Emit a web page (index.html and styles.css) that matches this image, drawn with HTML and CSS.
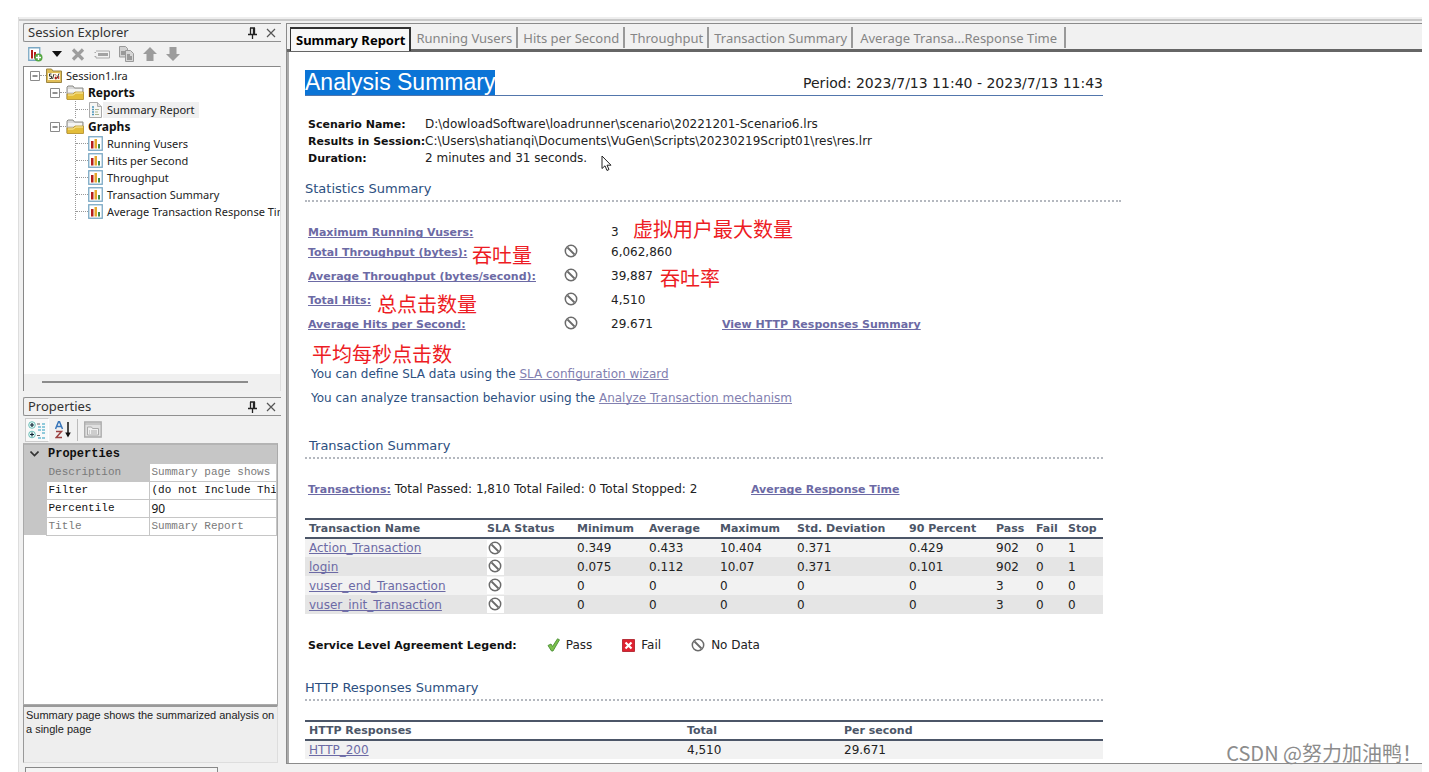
FILE: index.html
```html
<!DOCTYPE html>
<html lang="en">
<head>
<meta charset="utf-8">
<title>Analysis - Session1.lra</title>
<link rel="stylesheet" href="styles.css">
</head>
<body>
<svg class="defs" aria-hidden="true">
  <symbol id="pin" viewBox="0 0 9 12"><path d="M2 1h5M2.500 1v6M6.500 1v6M5.500 1v6M0 7.500h9M4.500 8v4" fill="none" stroke="#222" stroke-width="1.300"/></symbol>
  <symbol id="close" viewBox="0 0 10 10"><path d="M1 1l8 8M9 1l-8 8" fill="none" stroke="#555" stroke-width="1.200"/></symbol>
  <symbol id="nodata" viewBox="0 0 14 14"><circle cx="7" cy="7" r="5.700" fill="#fff" stroke="#6b6b6b" stroke-width="1.500"/><path d="M3.500 3.500l7 7" stroke="#6b6b6b" stroke-width="1.800"/></symbol>
  <symbol id="chart" viewBox="0 0 15 15"><rect x=".75" y=".75" width="13.500" height="13.500" fill="#fff" stroke="#7ba8c4" stroke-width="1.300"/><path d="M3 5h2.500v7.500H3z" fill="#b5201c"/><path d="M6.500 3H9v9.500H6.500z" fill="#e6a82c"/><path d="M10 8h2v4.500h-2z" fill="#3f8b46"/></symbol>
  <symbol id="folder" viewBox="0 0 18 16"><path d="M1 14V2l1-1h5l1.500 2H17v11z" fill="#d8d8d8" stroke="#8b8b86"/><path d="M2 4h14v3H2z" fill="#f4f4f2"/><path d="M1 14.500V9h6l2-2h8.500v7.500z" fill="#e3bd3a" stroke="#b8922a" stroke-width=".8"/><path d="M2 10h5.500l2-2H17" fill="none" stroke="#fbeeb0"/></symbol>
  <symbol id="session" viewBox="0 0 16 15"><path d="M.5 14.500V1h5l1.500 2h8.500v11.500z" fill="#e0bd57" stroke="#9d8642"/><path d="M2 5h12v7H2z" fill="#fffbea"/><path d="M5.500 6h-2v2.200h2v2.300h-2M8 6l-1.500 5" fill="none" stroke="#333"/><path d="M9 6l1.500 2M9 9h1.500v2H9z" fill="#b5201c" stroke="#b5201c" stroke-width=".6"/><path d="M13 5.500l-2 5" stroke="#333"/><path d="M12.200 8h1v3h-1z" fill="#b5201c"/></symbol>
  <symbol id="minus" viewBox="0 0 10 10"><path d="M.5 .5h9v9h-9z" fill="#fff" stroke="#8a8a8a"/><path d="M2.500 5h5" stroke="#222"/></symbol>
</svg>
<div class="app">
  <aside class="side">
    <section class="explorer">
      <header class="pane-title"><h2>Session Explorer</h2>
        <button type="button" aria-label="Pin explorer"><svg width="9" height="12"><use href="#pin"/></svg></button>
        <button type="button" aria-label="Close explorer"><svg width="10" height="10"><use href="#close"/></svg></button>
      </header>
      <div class="tools">
        <button type="button" aria-label="Add"><svg width="15" height="15" viewBox="0 0 15 15"><path d="M.75 .75h11v12.500h-11z" fill="#fff" stroke="#7ba8c4" stroke-width="1.300"/><path d="M3 3h2v8.500H3z" fill="#b5201c"/><path d="M6 5h2v6.500H6z" fill="#b5201c"/><circle cx="10.500" cy="10.500" r="4" fill="#55a743"/><path d="M10.500 8v5M8 10.500h5" stroke="#fff" stroke-width="1.400"/></svg></button>
        <button type="button" aria-label="Add options"><svg width="10" height="6" viewBox="0 0 10 6"><path d="M0 0h10L5 6z" fill="#111"/></svg></button>
        <button type="button" aria-label="Delete"><svg width="14" height="13" viewBox="0 0 14 13"><path d="M2 1.500l10 10M12 1.500l-10 10" stroke="#9d9d9d" stroke-width="3.200"/></svg></button>
        <button type="button" aria-label="Rename"><svg width="16" height="9" viewBox="0 0 16 9"><path d="M2 1h13.500v7H2V6.500H.5M.5 2.500H2" fill="none" stroke="#a9a9a9"/><path d="M4 3h10v3H4z" fill="#a2a2a2"/></svg></button>
        <button type="button" aria-label="Duplicate"><svg width="15" height="16" viewBox="0 0 15 16"><path d="M.5 .5h6l2 2V11h-8z" fill="#d2d2d2" stroke="#999"/><path d="M2 5h4v4H2z" fill="#999"/><path d="M6.500 4.500h5l3 3v8h-8z" fill="#d6d6d6" stroke="#999"/><path d="M8 8h3v2h2v4H8z" fill="#999"/></svg></button>
        <button type="button" aria-label="Move up"><svg width="14" height="14" viewBox="0 0 14 14"><path d="M7 0l7 7h-3.500v7h-7V7H0z" fill="#9c9c9c"/></svg></button>
        <button type="button" aria-label="Move down"><svg width="14" height="14" viewBox="0 0 14 14"><path d="M7 14l7-7h-3.500V0h-7v7H0z" fill="#9c9c9c"/></svg></button>
      </div>
      <div class="tree">
        <ul class="tree-root">
          <li><div class="node"><svg width="10" height="10"><use href="#minus"/></svg><i class="link"></i><svg width="16" height="15"><use href="#session"/></svg><span>Session1.lra</span></div>
            <ul class="groups">
              <li><div class="node"><svg width="10" height="10"><use href="#minus"/></svg><i class="link"></i><svg width="18" height="16"><use href="#folder"/></svg><b>Reports</b></div>
                <ul class="leaves"><li class="node"><i class="link long"></i><svg width="15" height="16" viewBox="0 0 15 16"><path d="M1.500 .5h8l4 4v11h-12z" fill="#f6f6f4" stroke="#aaa"/><path d="M9.500 .5v4h4" fill="#ddd" stroke="#aaa"/><path d="M4 5h2M4 7.500h2M4 10h2M4 12.500h2" stroke="#4c94bb" stroke-width="1.300"/><path d="M7 7.500h4M7 10h3M7 12.500h4" stroke="#a8b48c"/></svg><span class="picked">Summary Report</span></li></ul>
              </li>
              <li><div class="node"><svg width="10" height="10"><use href="#minus"/></svg><i class="link"></i><svg width="18" height="16"><use href="#folder"/></svg><b>Graphs</b></div>
                <ul class="leaves">
                  <li class="node"><i class="link long"></i><svg width="15" height="15"><use href="#chart"/></svg><span>Running Vusers</span></li>
                  <li class="node"><i class="link long"></i><svg width="15" height="15"><use href="#chart"/></svg><span>Hits per Second</span></li>
                  <li class="node"><i class="link long"></i><svg width="15" height="15"><use href="#chart"/></svg><span>Throughput</span></li>
                  <li class="node"><i class="link long"></i><svg width="15" height="15"><use href="#chart"/></svg><span>Transaction Summary</span></li>
                  <li class="node"><i class="link long"></i><svg width="15" height="15"><use href="#chart"/></svg><span>Average Transaction Response Time</span></li>
                </ul>
              </li>
            </ul>
          </li>
        </ul>
        <div class="hscroll"><i></i></div>
      </div>
    </section>
    <section class="props">
      <header class="pane-title"><h2>Properties</h2>
        <button type="button" aria-label="Pin properties"><svg width="9" height="12"><use href="#pin"/></svg></button>
        <button type="button" aria-label="Close properties"><svg width="10" height="10"><use href="#close"/></svg></button>
      </header>
      <div class="tools prop-tools">
        <button type="button" class="on" aria-label="Categorized"><svg width="18" height="18" viewBox="0 0 18 18"><circle cx="4" cy="4" r="3.300" fill="#e2fbf8" stroke="#72beb8"/><circle cx="4" cy="13.500" r="3.300" fill="#e2fbf8" stroke="#72beb8"/><path d="M2 4h4M4 2v4M2 13.500h4M4 11.500v4" stroke="#123" stroke-width="1.200"/><path d="M9 3h3M9 14.500h3" stroke="#666"/><path d="M10 6h3M14 3h3M14 6h3M10 9h3M14 9h3M14 12h3M10 17h3M14 17h3" stroke="#6dbad1" stroke-width="1.300"/></svg></button>
        <button type="button" aria-label="Alphabetical"><svg width="16" height="18" viewBox="0 0 16 18"><path d="M.5 8L3.500 .8h1L7.500 8M1.500 5.500h5" fill="none" stroke="#3976ba" stroke-width="1.500"/><path d="M1 10.500h5.500L1.200 16.500H7" fill="none" stroke="#9b4242" stroke-width="1.500"/><path d="M13 1v14" stroke="#111" stroke-width="1.500"/><path d="M10.200 11.500h5.600L13 16.500z" fill="#111"/></svg></button>
        <i class="sep"></i>
        <button type="button" aria-label="Property pages"><svg width="18" height="17" viewBox="0 0 18 17"><path d="M.7 1h16.500v15H.7z" fill="#e0e0e0" stroke="#aaa" stroke-width="1.300"/><path d="M1 3h16" stroke="#aaa"/><path d="M3.500 6h4l1 1.500h6V14h-11z" fill="#f0f0f0" stroke="#aaa"/><path d="M5 10h1M7 10h6M5 12h1M7 12h6" stroke="#aaa"/></svg></button>
      </div>
      <div class="grid-box">
        <table class="prop-grid">
          <colgroup><col class="c-gut"><col class="c-key"><col></colgroup>
          <tr class="cat"><th><svg width="9" height="6" viewBox="0 0 9 6"><path d="M.5 .5l4 4 4-4" fill="none" stroke="#333" stroke-width="1.600"/></svg></th><th colspan="2">Properties</th></tr>
          <tr class="dim first"><th></th><td>Description</td><td>Summary page shows the summarized analysis on a single page</td></tr>
          <tr><th></th><td>Filter</td><td>(do not Include Think Time)</td></tr>
          <tr><th></th><td>Percentile</td><td class="sans">90</td></tr>
          <tr class="dim"><th></th><td>Title</td><td>Summary Report</td></tr>
        </table>
      </div>
      <p class="hint">Summary page shows the summarized analysis on a single page</p>
    </section>
    <div class="stub"></div>
  </aside>
  <main class="doc">
    <nav class="tabs">
      <button type="button" class="active">Summary Report</button><button type="button">Running Vusers</button><button type="button">Hits per Second</button><button type="button">Throughput</button><button type="button">Transaction Summary</button><button type="button" class="wide">Average Transa...Response Time</button>
    </nav>
    <article class="report">
      <div class="title"><h1>Analysis Summary</h1><span>Period: 2023/7/13 11:40 - 2023/7/13 11:43</span></div>
      <dl class="meta">
        <dt>Scenario Name:</dt><dd>D:\dowloadSoftware\loadrunner\scenario\20221201-Scenario6.lrs</dd>
        <dt>Results in Session:</dt><dd>C:\Users\shatianqi\Documents\VuGen\Scripts\20230219Script01\res\res.lrr</dd>
        <dt>Duration:</dt><dd>2 minutes and 31 seconds.</dd>
      </dl>
      <h2 class="section stats-head">Statistics Summary</h2>
      <div class="stats">
        <div class="stat top"><a href="#">Maximum Running Vusers:</a><i></i><span>3</span></div>
        <div class="stat"><a href="#">Total Throughput (bytes):</a><svg width="14" height="14"><use href="#nodata"/></svg><span>6,062,860</span></div>
        <div class="stat"><a href="#">Average Throughput (bytes/second):</a><svg width="14" height="14"><use href="#nodata"/></svg><span>39,887</span></div>
        <div class="stat"><a href="#">Total Hits:</a><svg width="14" height="14"><use href="#nodata"/></svg><span>4,510</span></div>
        <div class="stat"><a href="#">Average Hits per Second:</a><svg width="14" height="14"><use href="#nodata"/></svg><span>29.671</span><a href="#">View HTTP Responses Summary</a></div>
        <em class="note n1">虚拟用户最大数量</em><em class="note n2">吞吐量</em><em class="note n3">吞吐率</em><em class="note n4">总点击数量</em><em class="note n5">平均每秒点击数</em>
      </div>
      <div class="tips">
        <p>You can define SLA data using the <a href="#">SLA configuration wizard</a></p>
        <p>You can analyze transaction behavior using the <a href="#">Analyze Transaction mechanism</a></p>
      </div>
      <h2 class="section inset">Transaction Summary</h2>
      <div class="totals"><p><a href="#">Transactions:</a> Total Passed: 1,810 Total Failed: 0 Total Stopped: 2</p><p><a href="#">Average Response Time</a></p></div>
      <table class="data">
        <colgroup><col class="w-name"><col class="w-sla"><col class="w-min"><col class="w-avg"><col class="w-max"><col class="w-std"><col class="w-pct"><col class="w-pass"><col class="w-fail"><col></colgroup>
        <thead><tr><th>Transaction Name</th><th>SLA Status</th><th>Minimum</th><th>Average</th><th>Maximum</th><th>Std. Deviation</th><th>90 Percent</th><th>Pass</th><th>Fail</th><th>Stop</th></tr></thead>
        <tbody>
          <tr><td><a href="#">Action_Transaction</a></td><td><svg width="17" height="17" viewBox="-1 -1 17 17"><use href="#nodata" width="14" height="14"/></svg></td><td>0.349</td><td>0.433</td><td>10.404</td><td>0.371</td><td>0.429</td><td>902</td><td>0</td><td>1</td></tr>
          <tr><td><a href="#">login</a></td><td><svg width="17" height="17" viewBox="-1 -1 17 17"><use href="#nodata" width="14" height="14"/></svg></td><td>0.075</td><td>0.112</td><td>10.07</td><td>0.371</td><td>0.101</td><td>902</td><td>0</td><td>1</td></tr>
          <tr><td><a href="#">vuser_end_Transaction</a></td><td><svg width="17" height="17" viewBox="-1 -1 17 17"><use href="#nodata" width="14" height="14"/></svg></td><td>0</td><td>0</td><td>0</td><td>0</td><td>0</td><td>3</td><td>0</td><td>0</td></tr>
          <tr><td><a href="#">vuser_init_Transaction</a></td><td><svg width="17" height="17" viewBox="-1 -1 17 17"><use href="#nodata" width="14" height="14"/></svg></td><td>0</td><td>0</td><td>0</td><td>0</td><td>0</td><td>3</td><td>0</td><td>0</td></tr>
        </tbody>
      </table>
      <div class="legend">
        <b>Service Level Agreement Legend:</b>
        <span><svg width="13" height="14" viewBox="0 0 13 14"><path d="M1 7.500l3-1.500 1.500 2.500L10.500 .8l2 1L6 13H4.500z" fill="#7cc04c" stroke="#4b8e35" stroke-width=".9"/></svg>Pass</span>
        <span><svg width="13" height="13" viewBox="0 0 13 13"><path d="M.5 .5h12v12H.5z" fill="#df2230" stroke="#b8303a"/><path d="M3.500 3.500l6 6M9.500 3.500l-6 6" stroke="#fff" stroke-width="2.200"/></svg>Fail</span>
        <span><svg width="14" height="14"><use href="#nodata"/></svg>No Data</span>
      </div>
      <h2 class="section">HTTP Responses Summary</h2>
      <table class="data http">
        <colgroup><col class="w-code"><col class="w-total"><col></colgroup>
        <thead><tr><th>HTTP Responses</th><th>Total</th><th>Per second</th></tr></thead>
        <tbody><tr><td><a href="#">HTTP_200</a></td><td>4,510</td><td>29.671</td></tr></tbody>
      </table>
      <svg class="cursor" width="11" height="17" viewBox="0 0 11 17" aria-hidden="true"><path d="M1 1v12.500l3-2.700 2 4.700 2-1-2-4.300h4z" fill="#fff" stroke="#222"/></svg>
    </article>
  </main>
  <div class="credit">CSDN @努力加油鸭！</div>
</div>
</body>
</html>
```
FILE: styles.css
```css
* { box-sizing: border-box; }
body { margin: 0; background: #fff; font-family: "DejaVu Sans", "Noto Sans CJK SC", sans-serif; font-size: 12px; color: #222; }
h1, h2, p, ul, dl, dd { margin: 0; padding: 0; font-weight: normal; }
ul { list-style: none; }
svg { display: block; flex: none; }
button { border: 0; padding: 0; background: none; font: inherit; color: inherit; }
a { color: #6c6aa5; text-decoration-skip-ink: none; }
.defs { position: absolute; width: 0; height: 0; }

.app { position: relative; display: flex; min-height: 755px; margin: 17px 7px 0 18px; padding: 6px 0 0 4px; gap: 5px; background: #f1f1f1; border-left: 1px solid #ddd; box-shadow: inset 0 2px #eee, inset 0 4px #c9c9c9; overflow: hidden; }

/* left column */
.side { display: flex; flex-direction: column; flex: none; width: 258px; gap: 6px; font-family: "Noto Sans", sans-serif; font-size: 11px; }
.explorer { display: flex; flex-direction: column; height: 368px; }
.pane-title { display: flex; align-items: center; gap: 9px; height: 19px; padding: 0 5px 0 4px; border: 1px solid #909090; border-right: 0; border-radius: 2px 0 0 2px; }
.pane-title h2 { flex: 1; font-size: 13px; line-height: 17px; color: #333; }
.tools { display: flex; align-items: center; gap: 9px; height: 24px; padding: 0 5px; }
.tree { flex: 1; display: flex; flex-direction: column; border: 1px solid #888; border-right-color: #ddd; border-bottom: 0; background: #fff; min-height: 0; overflow: hidden; }
.tree-root { flex: 1; padding: 0 0 0 6px; }
.node { display: flex; align-items: center; height: 17px; white-space: nowrap; }
.node span, .node b { padding: 0 4px; line-height: 16px; }
.node b { font-size: 12px; color: #111; }
.node .picked { background: #f0f0f0; }
.link { width: 6px; flex: none; border-top: 1px dotted #999; }
.link.long { width: 12px; }
.groups { margin-left: 20px; }
.leaves { margin-left: 25px; border-left: 1px dotted #999; }
.hscroll { height: 17px; padding: 7px 32px 0 18px; background: #f0f0f0; }
.hscroll i { display: block; height: 2px; background: #8c8c8c; }

.props { display: flex; flex-direction: column; height: 366px; }
.prop-tools { height: 27px; padding: 0 2px; gap: 6px; }
.prop-tools .on { padding: 2px; background: #f9f9f9; border: 1px solid #ccc; border-right-color: #fff; }
.sep { height: 22px; border-left: 1px solid #bbb; }
.grid-box { flex: 1; margin-right: 3px; border: 1px solid #aaa; border-top: 2px solid #b4b4b4; background: #fff; overflow: hidden; }
.prop-grid { width: 100%; table-layout: fixed; border-collapse: collapse; font-family: "Liberation Mono", monospace; font-size: 11px; color: #111; }
.prop-grid tr { height: 18px; }
.prop-grid th { background: #c6c6c6; padding: 0 2px; font-size: 12px; text-align: left; }
.prop-grid th svg { margin-left: 4px; }
.prop-grid td { padding: 0 3px 0 2px; border: 1px solid #c6c6c6; white-space: nowrap; overflow: hidden; line-height: 15px; }
.prop-grid .dim td { color: #7a7a7a; }
.prop-grid .first td:nth-child(2) { background: #c6c6c6; }
.prop-grid .sans { font-family: "Noto Sans", sans-serif; font-size: 12px; }
.c-gut { width: 22px; }
.c-key { width: 103px; }
.hint { height: 58px; margin-right: 3px; padding: 1px 0 0 2px; border: 1px solid #999; border-top-width: 2px; border-right-color: #ddd; border-bottom-color: #ddd; background: #eee; font: 11px/14px "Liberation Sans", sans-serif; }
.stub { width: 193px; height: 12px; margin-left: 2px; border: 1px solid #888; background: #f4f4f4; margin-top: -2px; }

/* document */
.doc { flex: 1; min-width: 0; display: flex; flex-direction: column; height: 741px; border: 1px solid #8b8b8b; border-right: 0; }
.tabs { display: flex; height: 28px; padding: 3px 0 0 3px; border-bottom: 3px solid #666; font: 13px/22px "Noto Sans", sans-serif; color: #858585; }
.tabs button { height: 21px; padding: 0 4px 0 5px; border-right: 2px solid #999; line-height: 22px; white-space: nowrap; }
.tabs .wide { padding: 0 7px; }
.tabs .active { height: 24px; border: 1px solid #333; border-width: 2px 2px 0 1px; background: #f8f8f8; color: #000; font-weight: bold; line-height: 20px; }
.report { position: relative; flex: 1; padding: 18px 18px 0 16px; border-left: 2px solid #aaa; background: #fff; overflow: hidden; }
.title { display: flex; align-items: center; justify-content: space-between; max-width: 798px; height: 26px; border-bottom: 1px solid #5276ac; }
.title h1 { font: 23px/25px "Liberation Sans", sans-serif; background: #0b74d6; color: #fff; }
.title span { font-size: 14px; }
.meta { display: grid; grid-template-columns: 117px auto; margin: 20px 0 0 3px; line-height: 17px; }
.meta dt { font-weight: bold; white-space: nowrap; font-size: 11px; color: #111; }
.section { max-width: 798px; height: 22px; border-bottom: 2px dotted #b4b8bf; font-size: 13px; line-height: 18px; color: #2c4f80; }
.stats-head { max-width: 816px; margin-top: 13px; }
.inset { margin-top: 27px; padding-left: 4px; }
.stats { position: relative; padding: 22px 0 0 3px; }
.stat { display: grid; grid-template-columns: 256px 47px 111px auto; align-items: center; height: 24px; }
.stat svg { margin-top: -2px; }
.stat.top { height: 16px; }
.stat a { justify-self: start; font-size: 11px; font-weight: bold; white-space: nowrap; }
.note { position: absolute; font: 20px/24px "Noto Sans CJK SC", sans-serif; color: #ed1c24; white-space: nowrap; }
.n1 { left: 328px; top: 15px; }
.n2 { left: 167px; top: 41px; }
.n3 { left: 355px; top: 64px; }
.n4 { left: 72px; top: 90px; }
.n5 { left: 7px; top: 140px; }
.tips { margin-top: 26px; padding-left: 6px; line-height: 24px; color: #2c4f80; }
.tips a { color: #8280b0; }
.totals { display: grid; grid-template-columns: 443px auto; margin: 21px 0 0 3px; line-height: 18px; }
.totals a { font-size: 11px; font-weight: bold; }
.data { width: 100%; max-width: 798px; margin-top: 19px; table-layout: fixed; border-collapse: collapse; }
.data th, .data td { padding: 0 4px; text-align: left; white-space: nowrap; }
.data th { height: 19px; border-top: 2px solid #4c5668; border-bottom: 2px solid #4c5668; font-size: 11px; line-height: 15px; color: #4c5668; }
.data td { height: 19px; }
.data tbody tr { background: #f2f2f2; }
.data tbody tr:nth-child(even) { background: #e5e5e5; }
.data svg { background: #fff; }
.w-name { width: 178px; } .w-sla { width: 90px; } .w-min { width: 72px; } .w-avg { width: 71px; } .w-max { width: 77px; }
.w-std { width: 112px; } .w-pct { width: 87px; } .w-pass { width: 40px; } .w-fail { width: 32px; }
.w-code { width: 378px; } .w-total { width: 157px; }
.legend { display: flex; align-items: center; gap: 30px; height: 20px; margin: 21px 0 24px 3px; }
.legend b { font-size: 11px; color: #111; }
.legend span { display: flex; align-items: center; gap: 6px; }
.cursor { position: absolute; left: 312px; top: 103px; }
.credit { position: absolute; right: 0; bottom: 13px; font: 20px/26px "Noto Sans CJK SC", sans-serif; color: #8c8c8c; }
```
